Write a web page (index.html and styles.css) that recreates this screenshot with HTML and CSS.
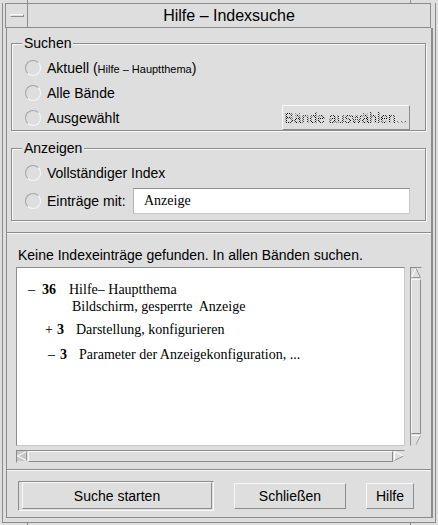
FILE: index.html
```html
<!DOCTYPE html>
<html lang="de">
<head>
<meta charset="utf-8">
<title>Hilfe – Indexsuche</title>
<link rel="stylesheet" href="styles.css">
</head>
<body>
<div class="frame">
  <span class="tick tick-tl"></span>
  <span class="tick tick-tr"></span>
  <span class="tick tick-bl"></span>
  <span class="tick tick-br"></span>
  <div class="outer">
    <div class="titlebar">
      <div class="menubtn"><span class="dash"></span></div>
      <div class="title">Hilfe – Indexsuche</div>
    </div>
    <div class="client">
      <div class="group g-search">
        <span class="glabel">Suchen</span>
        <div class="row"><span class="radio"></span><span class="lbl">Aktuell (<span class="small">Hilfe – Hauptthema</span>)</span></div>
        <div class="row"><span class="radio"></span><span class="lbl">Alle Bände</span></div>
        <div class="row"><span class="radio"></span><span class="lbl">Ausgewählt</span><span class="btn btn-disabled"><span class="stipple">Bände auswählen...</span></span></div>
      </div>
      <div class="group g-show">
        <span class="glabel">Anzeigen</span>
        <div class="row r1"><span class="radio"></span><span class="lbl">Vollständiger Index</span></div>
        <div class="row r2"><span class="radio"></span><span class="lbl">Einträge mit:</span><span class="field">Anzeige</span></div>
      </div>
      <div class="sep sep-top"></div>
      <div class="message">Keine Indexeinträge gefunden. In allen Bänden suchen.</div>
      <div class="listwrap">
        <div class="list">
          <div class="entry lvl0"><span class="pre"><span class="sign">–</span><b>36</b></span><span class="txt">Hilfe– Hauptthema</span></div>
          <div class="entry sub">Bildschirm, gesperrte&nbsp; Anzeige</div>
          <div class="entry lvl1"><span class="pre"><span class="sign">+</span><b>3</b></span><span class="txt">Darstellung, konfigurieren</span></div>
          <div class="entry lvl2"><span class="pre"><span class="sign">–</span><b>3</b></span><span class="txt">Parameter der Anzeigekonfiguration, ...</span></div>
        </div>
        <div class="vscroll">
          <span class="arrow">
            <svg width="10" height="10" viewBox="0 0 10 10"><path d="M0.5 9.5 L5 0.5" stroke="#ffffff" fill="none"/><path d="M5 0.5 L9.5 9.5 L0.5 9.5" stroke="#9a9a9a" fill="none"/></svg>
          </span>
          <span class="thumb"></span>
          <span class="arrow">
            <svg width="10" height="10" viewBox="0 0 10 10"><path d="M0.5 0.5 L9.5 0.5 L5 9.5" stroke="#ffffff" fill="none"/><path d="M5 9.5 L9.5 0.5" stroke="#9a9a9a" fill="none"/></svg>
          </span>
        </div>
        <div class="hscroll">
          <span class="arrow arrow-left">
            <svg width="10" height="10" viewBox="0 0 10 10"><path d="M9.5 0.5 L0.5 5 L9.5 9.5" stroke="#ffffff" fill="none"/><path d="M9.5 0.5 L9.5 9.5" stroke="#9a9a9a" fill="none"/></svg>
          </span>
          <span class="thumb"></span>
          <span class="arrow">
            <svg width="10" height="10" viewBox="0 0 10 10"><path d="M0.5 9.5 L0.5 0.5 L9.5 5" stroke="#ffffff" fill="none"/><path d="M9.5 5 L0.5 9.5" stroke="#9a9a9a" fill="none"/></svg>
          </span>
        </div>
      </div>
      <div class="sep sep-bottom"></div>
      <div class="buttons">
        <span class="default-ring"><span class="btn btn-search">Suche starten</span></span>
        <span class="btn btn-close">Schließen</span>
        <span class="btn btn-help">Hilfe</span>
      </div>
    </div>
  </div>
</div>
</body>
</html>
```
FILE: styles.css
```css
html, body {
  margin: 0;
  padding: 0;
  background: #dedede;
}
body {
  font-family: "Liberation Sans", Arial, sans-serif;
  font-size: 14px;
  color: #000;
}
.frame {
  position: relative;
  width: 438px;
  height: 525px;
  box-sizing: border-box;
  padding: 3px 2px 2px 2px;
  display: flex;
  flex-direction: column;
}
.tick {
  position: absolute;
  background: #8c8c8c;
}
.tick-tl { left: 27px; top: 0; width: 1px; height: 3px; }
.tick-tr { left: 410px; top: 0; width: 1px; height: 3px; }
.tick-bl { left: 27px; bottom: 0; width: 1px; height: 3px; }
.tick-br { left: 410px; bottom: 0; width: 1px; height: 3px; }
.outer {
  flex: 1;
  display: flex;
  flex-direction: column;
  border-left: 1px solid #8c8c8c;
  border-right: 1px solid #8c8c8c;
  border-bottom: 1px solid #8c8c8c;
  padding: 0 2px 4px 2px;
}
.titlebar {
  height: 25px;
  box-sizing: border-box;
  border: 1px solid #8c8c8c;
  display: flex;
  align-items: stretch;
  margin-right: 2px;
}
.menubtn {
  width: 21px;
  border-right: 1px solid #8c8c8c;
  display: flex;
  align-items: center;
  justify-content: center;
}
.dash {
  width: 12px;
  height: 1px;
  border: 1px solid;
  border-color: #f8f8f8 #8c8c8c #8c8c8c #f8f8f8;
}
.title {
  flex: 1;
  text-align: center;
  font-size: 16px;
  line-height: 23px;
}
.client {
  flex: 1;
  margin-left: 1px;
  border-left: 1px solid #8c8c8c;
  border-right: 2px solid #8c8c8c;
  border-bottom: 1px solid #8c8c8c;
  display: flex;
  flex-direction: column;
}
.group {
  position: relative;
  border: 1px solid #8c8c8c;
  box-shadow: inset 1px 1px 0 #f8f8f8, 1px 1px 0 #f8f8f8;
  margin: 0 5px 0 4px;
  box-sizing: border-box;
}
.g-search {
  margin-top: 15px;
  height: 88px;
  padding-top: 11px;
}
.g-show {
  margin-top: 17px;
  height: 73px;
  padding-top: 12px;
}
.glabel {
  position: absolute;
  top: -9px;
  left: 10px;
  padding: 0 2px;
  background: #dedede;
  line-height: 16px;
}
.row {
  display: flex;
  align-items: center;
  height: 25px;
  padding-left: 13px;
}
.g-show .r1 { height: 24px; }
.g-show .r2 { height: 26px; margin-top: 3px; }
.radio {
  width: 14px;
  height: 14px;
  border: 1px solid;
  border-color: #a4a4a4 #f8f8f8 #f8f8f8 #a4a4a4;
  border-radius: 50%;
  margin-right: 6px;
  flex: none;
}
.small {
  font-size: 11px;
}
.btn {
  display: inline-flex;
  align-items: center;
  justify-content: center;
  box-sizing: border-box;
  border: 1px solid;
  border-color: #f8f8f8 #8c8c8c #8c8c8c #f8f8f8;
  background: #dedede;
}
.btn-disabled {
  margin-left: auto;
  margin-right: 15px;
  width: 128px;
  height: 25px;
}
.stipple {
  color: transparent;
  background-image: conic-gradient(#000 25%, transparent 0 50%, #000 0 75%, transparent 0);
  background-size: 2px 2px;
  -webkit-background-clip: text;
  background-clip: text;
}
.field {
  margin-left: auto;
  margin-right: 15px;
  width: 277px;
  height: 26px;
  box-sizing: border-box;
  background: #fff;
  border: 1px solid;
  border-color: #8c8c8c #c8c8c8 #c8c8c8 #b4b4b4;
  font-family: "Liberation Serif", "Times New Roman", serif;
  font-size: 14px;
  line-height: 24px;
  padding-left: 10px;
}
.sep {
  height: 0;
  border-top: 1px solid #8c8c8c;
  border-bottom: 1px solid #f8f8f8;
}
.sep-top { margin-top: 11px; }
.message {
  margin-top: 13px;
  padding-left: 11px;
  line-height: 16px;
}
.listwrap {
  margin: 4px 0 0 9px;
  display: grid;
  grid-template-columns: 389px 12px;
  grid-template-rows: 179px 13px;
  column-gap: 5px;
  row-gap: 4px;
}
.list {
  background: #fff;
  box-sizing: border-box;
  border: 1px solid;
  border-color: #8c8c8c #c8c8c8 #c8c8c8 #8c8c8c;
  padding-top: 13px;
  font-family: "Liberation Serif", "Times New Roman", serif;
  font-size: 14px;
}
.entry {
  display: flex;
  align-items: baseline;
  line-height: 17px;
}
.pre {
  display: inline-flex;
  gap: 7px;
}
.lvl0 { padding-left: 11px; }
.lvl0 .txt { margin-left: 13px; }
.sub { padding-left: 55px; }
.lvl1 { padding-left: 28px; margin-top: 6px; }
.lvl1 .pre { gap: 4px; }
.lvl1 .txt { margin-left: 12px; }
.lvl2 { padding-left: 31px; margin-top: 8px; }
.lvl2 .pre { gap: 5px; }
.lvl2 .txt { margin-left: 12px; }
.vscroll, .hscroll {
  display: flex;
  box-sizing: border-box;
  border: 1px solid;
  border-color: #8c8c8c #dedede #dedede #8c8c8c;
}
.vscroll { flex-direction: column; }
.arrow {
  flex: none;
  width: 10px;
  height: 10px;
  display: flex;
}
.arrow svg { display: block; }
.thumb {
  flex: 1;
  box-sizing: border-box;
  border: 1px solid;
  border-color: #f8f8f8 #8c8c8c #8c8c8c #f8f8f8;
}
.vscroll .thumb { margin: 1px 0; }
.hscroll .thumb { margin: 0 1px; }
.arrow-left { background: #c8c8c8; }
.sep-bottom { margin-top: 6px; }
.buttons {
  display: flex;
  align-items: center;
  margin-top: 10px;
  padding-left: 11px;
  height: 30px;
}
.default-ring {
  display: flex;
  box-sizing: border-box;
  width: 196px;
  height: 30px;
  border: 1px solid;
  border-color: #8c8c8c #f8f8f8 #f8f8f8 #8c8c8c;
  padding: 0 1px 1px 3px;
}
.btn-search { flex: 1; }
.btn-close { width: 112px; height: 26px; margin-left: 20px; }
.btn-help { width: 48px; height: 26px; margin-left: 20px; }
```
